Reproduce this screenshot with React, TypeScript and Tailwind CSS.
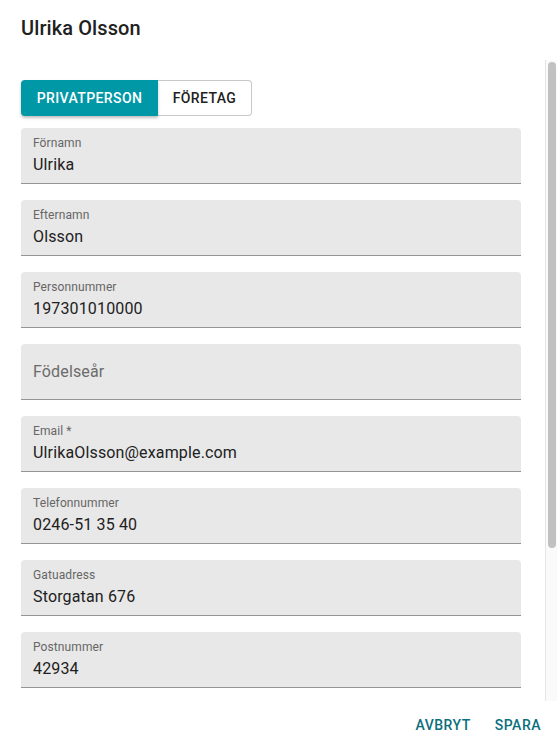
const fields: { label: string; value?: string }[] = [
  { label: "Förnamn", value: "Ulrika" },
  { label: "Efternamn", value: "Olsson" },
  { label: "Personnummer", value: "197301010000" },
  { label: "Födelseår" },
  { label: "Email *", value: "UlrikaOlsson@example.com" },
  { label: "Telefonnummer", value: "0246-51 35 40" },
  { label: "Gatuadress", value: "Storgatan 676" },
  { label: "Postnummer", value: "42934" },
];

function Field({ label, value }: { label: string; value?: string }) {
  return (
    <div className="relative mb-4 h-[56px] w-full shrink-0 rounded-t border-b border-[#949494] bg-[#e8e8e8]">
      {value ? (
        <>
          <div className="absolute left-3 top-[7px] text-[12px] leading-[17px] tracking-[0.1px] text-[#666666]">{label}</div>
          <div className="absolute left-3 top-[25px] text-[16px] leading-[23px] tracking-[0.15px] text-[#212121]">{value}</div>
        </>
      ) : (
        <div className="absolute left-3 top-[16px] text-[16px] leading-[23px] tracking-[0.15px] text-[#6b6b6b]">{label}</div>
      )}
    </div>
  );
}

export default function App() {
  return (
    <div className="flex h-[749px] w-[557px] flex-col bg-white font-['Roboto',sans-serif]">
      <div className="flex h-[60px] shrink-0 items-center px-[21px] pb-[4px]">
        <h2 className="text-[20px] font-medium leading-8 tracking-[0.1px] text-[#212121]">Ulrika Olsson</h2>
      </div>

      <div className="flex min-h-0 flex-1">
        <div className="flex flex-1 flex-col overflow-hidden pl-[21px] pr-[24px] pt-[20px]">
          <div className="mb-3 flex h-[36px] w-[231px] shrink-0">
            <button className="h-full w-[137px] rounded-l bg-[#0097a7] text-[14px] font-medium tracking-[0.4px] text-white shadow-[0_2px_3px_rgba(0,0,0,0.25)]">
              PRIVATPERSON
            </button>
            <button className="h-full flex-1 rounded-r border border-l-0 border-[#c8c8c8] text-[14px] font-medium tracking-[0.4px] text-[#212121]">
              FÖRETAG
            </button>
          </div>
          {fields.map((f) => (
            <Field key={f.label} label={f.label} value={f.value} />
          ))}
        </div>
        <div className="w-[12px] shrink-0 border-l border-[#e6e6e6] bg-[#fafafa] pl-[2px] pr-[1px] pt-[2px]">
          <div className="h-[486px] rounded-full bg-[#c1c1c1]" />
        </div>
      </div>

      <div className="flex h-[48px] shrink-0 items-center justify-end gap-2 pr-[8px]">
        <button className="px-2 py-1.5 text-[14px] font-medium tracking-[0.5px] text-[#0b6f7c]">AVBRYT</button>
        <button className="px-2 py-1.5 text-[14px] font-medium tracking-[0.5px] text-[#0b6f7c]">SPARA</button>
      </div>
    </div>
  );
}
